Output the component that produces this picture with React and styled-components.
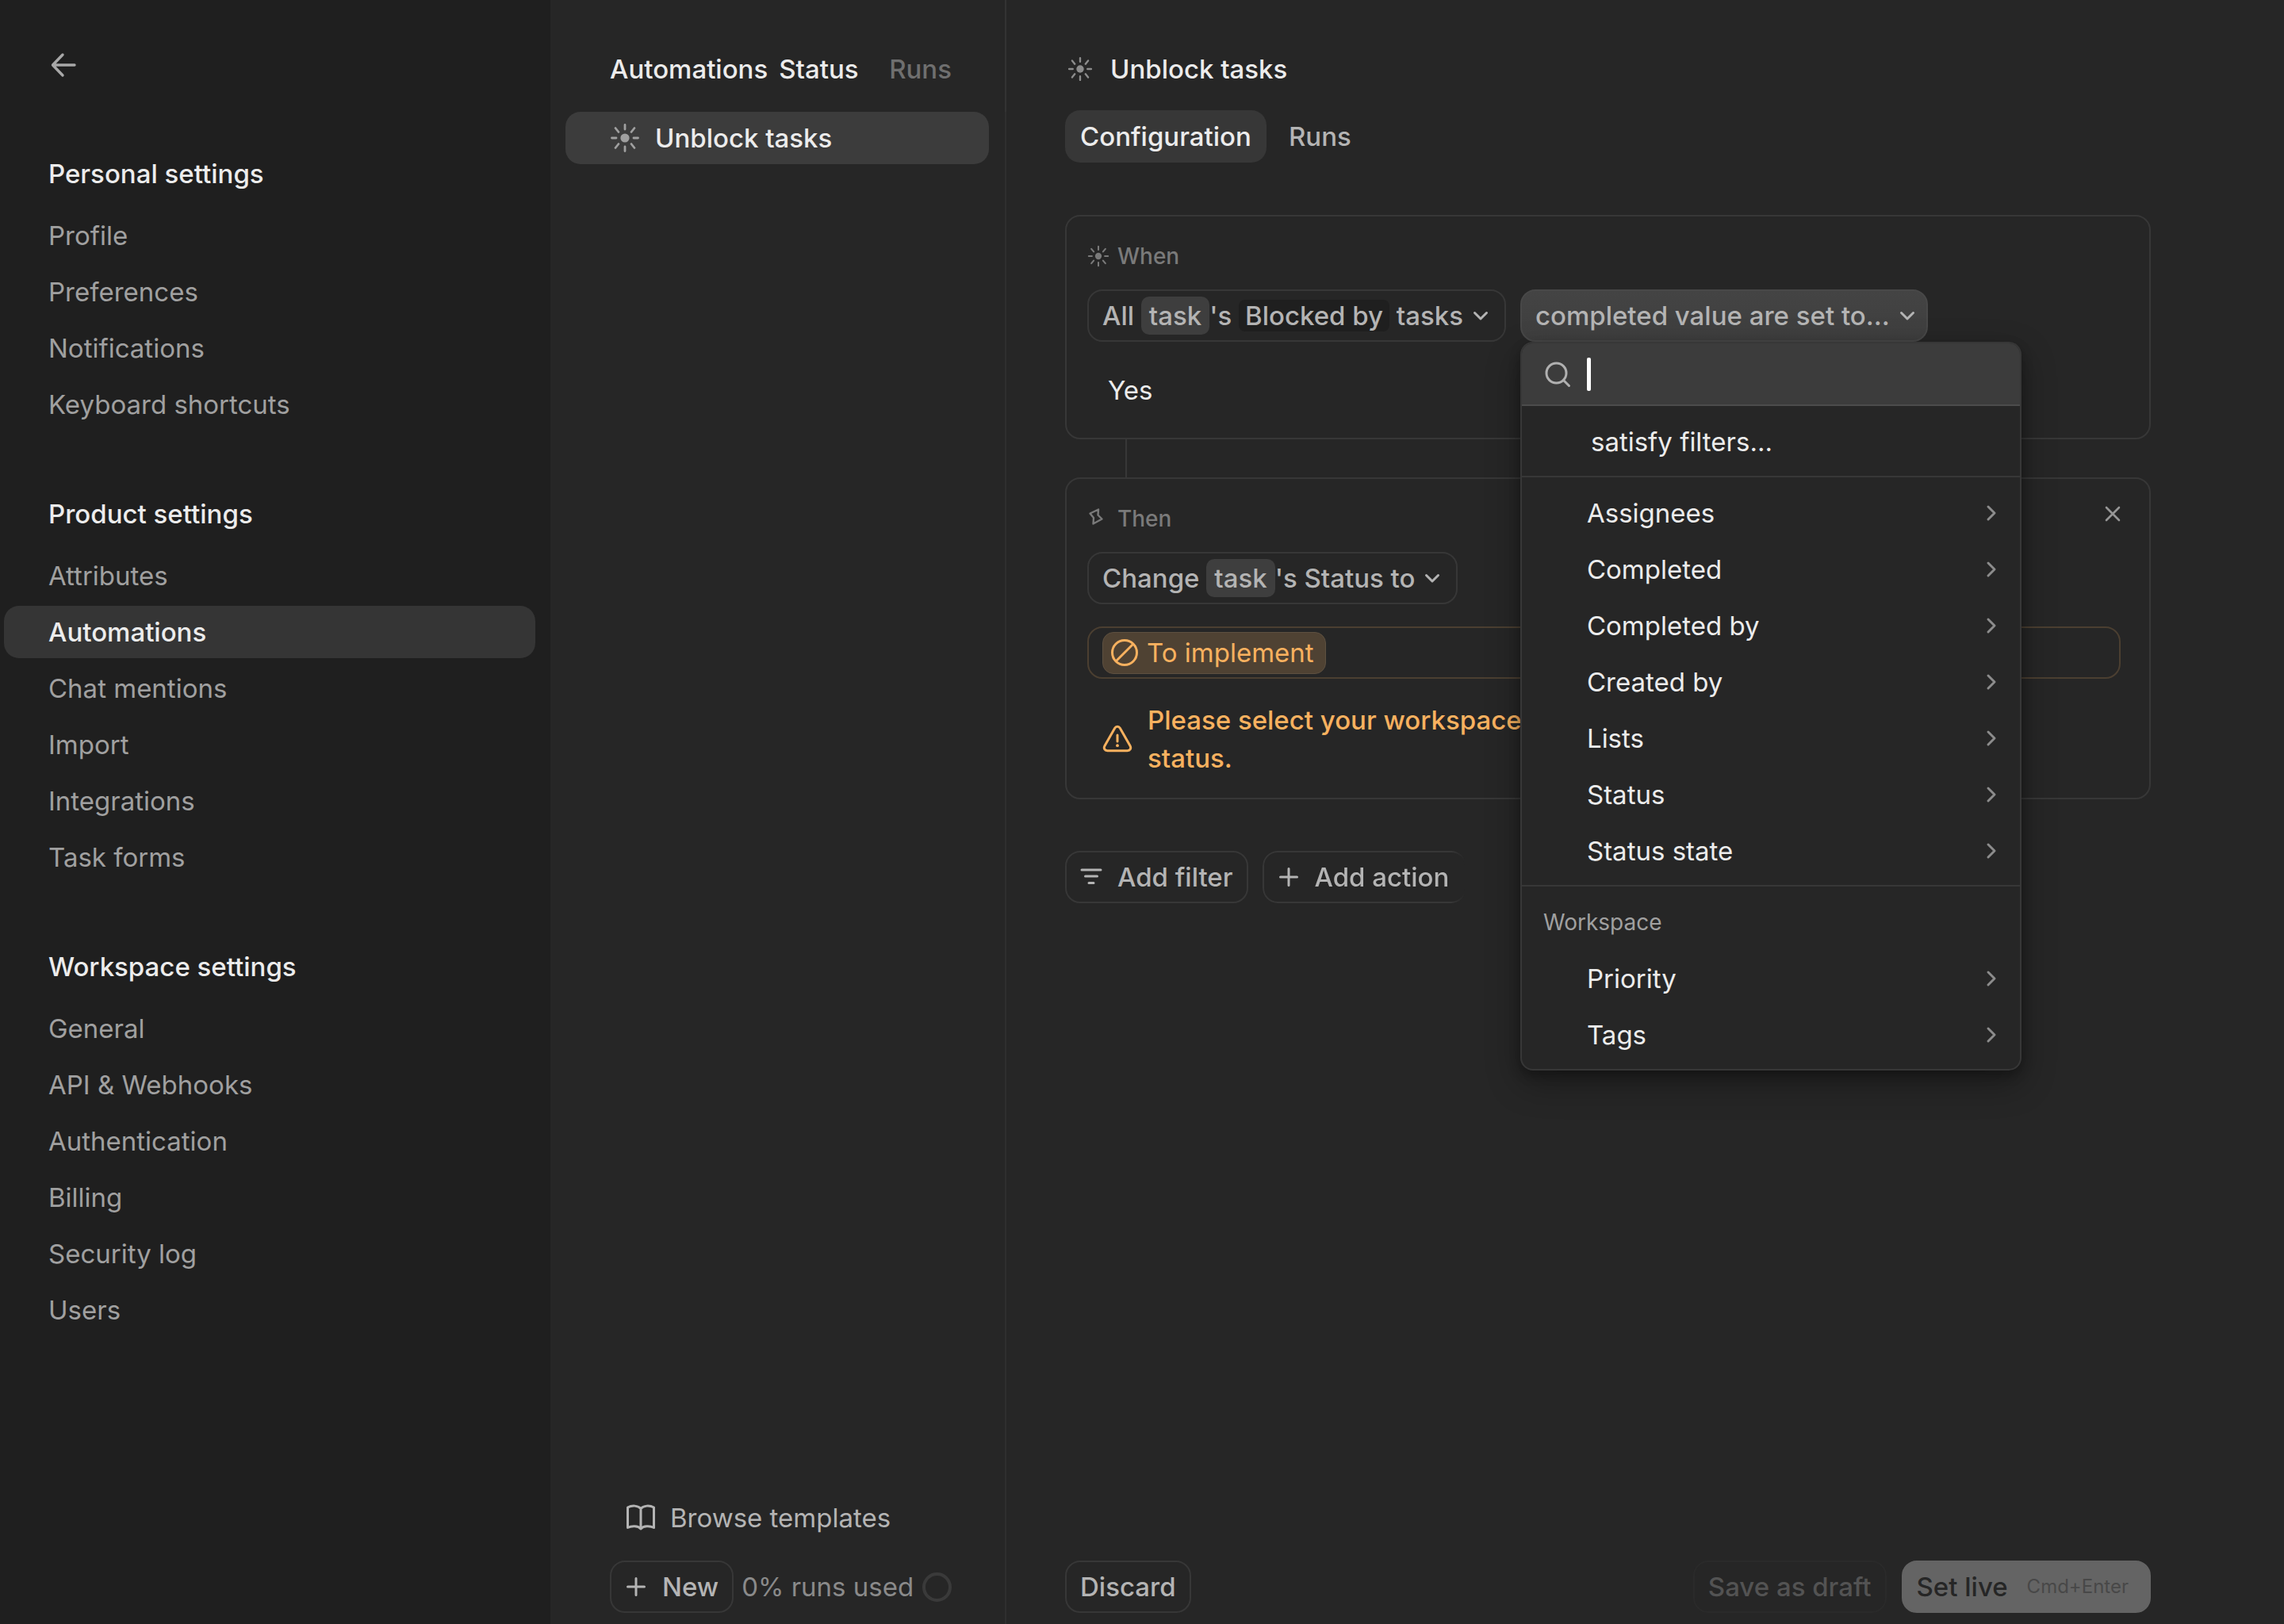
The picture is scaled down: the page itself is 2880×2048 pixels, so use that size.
import React from "react";
import styled, { createGlobalStyle } from "styled-components";

const c = {
  side: "#1f1f1f",
  bg: "#262626",
  line: "#373737",
  lineSoft: "#2f2f2f",
  raised: "#3c3c3c",
  text: "#ececec",
  muted: "#b4b4b4",
  nav: "#a0a0a0",
  dim: "#7a7a7a",
  orange: "#f8b15f",
  orangeBg: "#4f4233",
};

const GlobalStyle = createGlobalStyle`
  *, *::before, *::after { box-sizing: border-box; }
  body {
    margin: 0;
    background: ${c.bg};
    color: ${c.text};
    font-family: Inter, "Liberation Sans", sans-serif;
    font-size: 33px;
    line-height: 48px;
  }
  button, input { font: inherit; color: inherit; }
  button { cursor: pointer; }
  svg { display: block; flex: none; }
`;

const Layout = styled.div`
  display: grid;
  grid-template-columns: 694px 575px minmax(0, 1fr);
  min-height: 100vh;
`;

/* Settings navigation */

const Sidebar = styled.nav`
  display: flex;
  flex-direction: column;
  gap: 72px;
  padding: 54px 19px 54px 5px;
  background: ${c.side};
`;

const BackButton = styled.button`
  display: grid;
  place-items: center;
  width: 54px;
  height: 56px;
  margin: 0 0 4px 48px;
  padding: 0;
  border: 0;
  background: none;
  color: #a8a8a8;
`;

const NavGroup = styled.section`
  display: flex;
  flex-direction: column;
`;

const NavHeading = styled.h2`
  margin: 0 0 12px;
  padding: 0 56px;
  font-size: 33px;
  font-weight: 500;
  line-height: 66px;
`;

const NavList = styled.ul`
  display: flex;
  flex-direction: column;
  gap: 5px;
  margin: 0;
  padding: 0;
  list-style: none;
`;

const NavLink = styled.a`
  display: block;
  padding: 0 56px;
  border-radius: 19px;
  line-height: 66px;
  text-decoration: none;
  color: ${(p) => (p.$active ? c.text : c.nav)};
  background: ${(p) => (p.$active ? "#353535" : "transparent")};
  font-weight: ${(p) => (p.$active ? 500 : 400)};
`;

/* Automation list */

const ListColumn = styled.section`
  display: flex;
  flex-direction: column;
`;

const ListHeader = styled.header`
  display: flex;
  align-items: center;
  height: 141px;
  padding: 33px 67px 0 75px;
  border-right: 2px solid #333333;
  font-weight: 500;
`;

const ListTitle = styled.h1`
  margin: 0 14px 0 0;
  font-size: 33px;
  font-weight: 500;
`;

const HeaderTab = styled.button`
  padding: 0;
  border: 0;
  background: none;
  font-weight: 500;
  color: ${(p) => (p.$active ? c.text : "#6f6f6f")};
  & + & { margin-left: auto; }
`;

const ListBody = styled.div`
  flex: 1;
  padding: 0 20px 0 19px;
  border-right: 2px solid ${c.lineSoft};
`;

const AutomationRow = styled.button`
  display: flex;
  align-items: center;
  gap: 19px;
  width: 100%;
  height: 66px;
  padding: 0 56px;
  border: 0;
  border-radius: 19px;
  background: ${c.raised};
  font-weight: 500;
  svg { color: #a0a0a0; }
`;

const ListFooter = styled.footer`
  display: flex;
  flex-direction: column;
  gap: 21px;
  padding: 0 67px 14px 75px;
  border-right: 2px solid ${c.lineSoft};
`;

const BrowseLink = styled.a`
  display: flex;
  align-items: center;
  gap: 18px;
  height: 66px;
  padding: 0 20px;
  color: ${c.muted};
  font-weight: 400;
  text-decoration: none;
`;

const FooterRow = styled.div`
  display: flex;
  align-items: center;
  gap: 10px;
`;

const Usage = styled.span`
  display: flex;
  flex: 1;
  align-items: center;
  justify-content: space-between;
  white-space: nowrap;
  color: #8a8a8a;
`;

/* Shared buttons */

const Button = styled.button`
  display: inline-flex;
  align-items: center;
  gap: 19px;
  height: 66px;
  padding: 0 17px;
  border: 2px solid ${c.line};
  border-radius: 19px;
  background: transparent;
  color: ${c.muted};
  font-weight: 500;
  white-space: nowrap;
  &:disabled { cursor: default; }
`;

const GhostButton = styled(Button)`
  border-color: #2a2a2a;
  color: #535353;
`;

const PrimaryButton = styled(Button)`
  gap: 24px;
  padding-right: 26px;
  border-color: #646464;
  background: #646464;
  color: #262626;
`;

const Shortcut = styled.kbd`
  font-family: inherit;
  font-size: 24px;
  font-weight: 400;
  color: #484848;
`;

const FadingButton = styled(Button)`
  padding-right: 20px;
  mask-image: linear-gradient(to right, #000 calc(100% - 18px), transparent calc(100% - 2px));
`;

/* Editor */

const Editor = styled.main`
  display: flex;
  flex-direction: column;
  padding: 54px 168px 14px 74px;
`;

const EditorTitle = styled.div`
  display: flex;
  align-items: center;
  gap: 22px;
  height: 66px;
  padding-left: 3px;
  svg { color: #8c8c8c; }
  h2 { margin: 0; font-size: 33px; font-weight: 500; }
`;

const Tabs = styled.div`
  display: flex;
  gap: 9px;
  margin: 19px 0 66px;
`;

const Tab = styled.button`
  height: 66px;
  padding: 0 19px;
  border: 0;
  border-radius: 19px;
  background: ${(p) => (p.$active ? "#373737" : "transparent")};
  color: ${(p) => (p.$active ? c.text : c.muted)};
  font-weight: 500;
`;

const Card = styled.section`
  display: flex;
  flex-direction: column;
  gap: 28px;
  padding: 30px 36px 26px 26px;
  border: 2px solid ${c.line};
  border-radius: 19px;
`;

const CardTop = styled.header`
  display: flex;
  align-items: center;
  gap: 10px;
  height: 40px;
  margin-bottom: -6px;
  color: ${c.dim};
  h3 { margin: 0; font-size: 28px; font-weight: 500; line-height: 40px; }
`;

const CloseButton = styled.button`
  display: grid;
  place-items: center;
  width: 24px;
  height: 24px;
  margin: 0 -2px 12px auto;
  padding: 0;
  border: 0;
  background: none;
  color: #969696;
`;

const Connector = styled.div`
  width: 2px;
  height: 48px;
  margin-left: 76px;
  background: ${c.line};
`;

const Condition = styled.div`
  display: flex;
  gap: 18px;
`;

const Trigger = styled(Button)`
  gap: 10px;
  padding-right: ${(p) => (p.$open ? "12px" : "18px")};
  background: ${(p) => (p.$open ? "linear-gradient(#444444, #3e3e3e)" : "transparent")};
  border-color: ${(p) => (p.$open ? "#484848" : c.line)};
  svg { color: ${c.muted}; }
`;

const Token = styled.span`
  display: inline-block;
  height: ${(p) => (p.$dark ? "40px" : "48px")};
  padding: 0 ${(p) => (p.$dark ? "8px" : "10px")};
  border-radius: ${(p) => (p.$dark ? "8px" : "10px")};
  background: ${(p) => (p.$dark ? "#1f1f1f" : "#3e3e3e")};
  line-height: ${(p) => (p.$dark ? "40px" : "48px")};
`;

const Value = styled.p`
  margin: 0;
  padding: 0 26px;
  line-height: 67px;
`;

const StatusField = styled.button`
  display: flex;
  align-items: center;
  height: 66px;
  padding: 0 17px;
  border: 2px solid #4b3f31;
  border-radius: 19px;
  background: transparent;
`;

const StatusChip = styled.span`
  display: flex;
  align-items: center;
  gap: 10px;
  height: 53px;
  padding: 0 14px 0 9px;
  border: 1px solid #5d5040;
  border-radius: 14px;
  background: ${c.orangeBg};
  color: ${c.orange};
`;

const Warning = styled.p`
  display: flex;
  align-items: center;
  gap: 19px;
  margin: 0;
  padding-left: 19px;
  color: ${c.orange};
  font-weight: 500;
`;

const AddRow = styled.div`
  display: flex;
  gap: 18px;
  margin: 65px 0;
`;

const EditorFooter = styled.footer`
  display: flex;
  gap: 19px;
  margin-top: auto;
  & > :first-child { margin-right: auto; }
`;

/* Value menu */

const MenuAnchor = styled.div`
  position: relative;
`;

const Menu = styled.div`
  position: absolute;
  z-index: 10;
  top: 100%;
  left: 0;
  width: 632px;
  border: 2px solid ${c.line};
  border-radius: 16px;
  background: ${c.bg};
  box-shadow: 0 16px 44px rgba(0, 0, 0, 0.32), 0 6px 14px rgba(0, 0, 0, 0.28);
  overflow: hidden;
`;

const SearchBox = styled.label`
  display: flex;
  align-items: center;
  gap: 20px;
  height: 79px;
  padding: 0 28px;
  border-bottom: 2px solid #4c4c4c;
  background: ${c.raised};
  color: #b0b0b0;
`;

const Caret = styled.span`
  width: 5px;
  height: 42px;
  margin-right: -20px;
  border-radius: 2px;
  background: #ffffff;
`;

const SearchInput = styled.input`
  flex: 1;
  min-width: 0;
  padding: 0;
  border: 0;
  outline: 0;
  background: transparent;
  color: ${c.text};
  caret-color: transparent;
`;

const MenuSection = styled.div`
  display: flex;
  flex-direction: column;
  gap: 5px;
  padding: 12px 0 10px;
  & + & { border-top: 2px solid ${c.line}; }
`;

const MenuLabel = styled.div`
  padding: 0 27px;
  color: #a0a0a0;
  font-size: 28px;
  line-height: 66px;
`;

const MenuItem = styled.button`
  display: flex;
  align-items: center;
  justify-content: space-between;
  height: 66px;
  padding: 0 24px 0 ${(p) => (p.$indent ? "87px" : "82px")};
  border: 0;
  background: none;
  color: ${c.text};
  text-align: left;
  svg { color: #8c8c8c; }
`;

/* Icons */

const Stroke = ({ size = 24, box = size, width = 3, children }) => (
  <svg width={size} height={size} viewBox={`0 0 ${box} ${box}`} fill="none" stroke="currentColor"
    strokeWidth={width} strokeLinecap="round" strokeLinejoin="round" aria-hidden="true">
    {children}
  </svg>
);

const SunIcon = ({ size = 38 }) => (
  <Stroke size={size} box={38} width={2.8}>
    <circle cx="19" cy="19" r="5.6" fill="currentColor" stroke="none" />
    <path d="M19 2.500v5.500M19 30v5.500M2.500 19H8M30 19h5.500M7 6.500l4 5M31 6.500l-4 5M7 31.500l4-5M31 31.500l-4-5" />
  </Stroke>
);

const BackIcon = () => (
  <Stroke size={34} width={3.4}><path d="M31 17H4M16 4L3.500 17L16 30" /></Stroke>
);
const DownIcon = () => (
  <Stroke width={3}><path d="M4.500 8.500l7.500 7.500 7.500-7.500" /></Stroke>
);
const RightIcon = () => (
  <Stroke width={3}><path d="M8 4l8 8-8 8" /></Stroke>
);
const PlusIcon = () => (
  <Stroke size={28} width={3}><path d="M14 3.500v21M3.500 14h21" /></Stroke>
);
const CloseIcon = () => (
  <Stroke width={2.6}><path d="M4 4l16 16M20 4L4 20" /></Stroke>
);
const FilterIcon = () => (
  <Stroke size={28} width={3}><path d="M2 5h24M6.500 13h15M11 21.500h6" /></Stroke>
);
const SearchIcon = () => (
  <Stroke size={34} width={3}><circle cx="15.500" cy="15.500" r="12.500" /><path d="M25 25l6.500 6.500" /></Stroke>
);
const BookIcon = () => (
  <Stroke size={38} width={3}>
    <path d="M19 7.500C15.500 3.500 8 3 2.500 6v25.500c5-2.500 13-2.500 16.500 1.500 3.500-4 11.500-4 16.500-1.500V6C30 3 22.500 3.500 19 7.500zM19 7.500V33" />
  </Stroke>
);
const BanIcon = () => (
  <Stroke size={36} width={3}><circle cx="18" cy="18" r="15.500" /><path d="M8 28L28 8" /></Stroke>
);
const WarnIcon = () => (
  <Stroke size={38} width={3}>
    <path d="M15.700 5.200L3 27.500c-1.800 3.200 0 6.200 3.400 6.200h25.200c3.400 0 5.200-3 3.400-6.200L22.300 5.200c-1.600-2.700-5-2.700-6.600 0zM19 14v8" />
    <circle cx="19" cy="27.200" r="1.900" fill="currentColor" stroke="none" />
  </Stroke>
);
const BoltIcon = () => (
  <Stroke size={28} width={2.4}>
    <path d="M14 2.500L3.500 7.500L8 13L7.500 20.500L18.500 14.500L13.500 9.500z" />
  </Stroke>
);
const RingIcon = () => (
  <svg width="37" height="37" viewBox="0 0 37 37" fill="none" aria-hidden="true">
    <circle cx="18.5" cy="18.5" r="16.500" stroke="#3a3a3a" strokeWidth="4" />
  </svg>
);

const navGroups = [
  { title: "Personal settings", items: ["Profile", "Preferences", "Notifications", "Keyboard shortcuts"] },
  { title: "Product settings", items: ["Attributes", "Automations", "Chat mentions", "Import", "Integrations", "Task forms"] },
  { title: "Workspace settings", items: ["General", "API & Webhooks", "Authentication", "Billing", "Security log", "Users"] },
];

const attributes = ["Assignees", "Completed", "Completed by", "Created by", "Lists", "Status", "Status state"];
const workspaceAttributes = ["Priority", "Tags"];

const AttributeItem = ({ name }) => (
  <MenuItem role="menuitem" type="button">
    {name}
    <RightIcon />
  </MenuItem>
);

function ValueMenu() {
  return (
    <Menu role="menu">
      <SearchBox>
        <SearchIcon />
        <Caret />
        <SearchInput type="text" aria-label="Search values" />
      </SearchBox>
      <MenuSection>
        <MenuItem role="menuitem" type="button" $indent>satisfy filters...</MenuItem>
      </MenuSection>
      <MenuSection>
        {attributes.map((name) => <AttributeItem key={name} name={name} />)}
      </MenuSection>
      <MenuSection>
        <MenuLabel>Workspace</MenuLabel>
        {workspaceAttributes.map((name) => <AttributeItem key={name} name={name} />)}
      </MenuSection>
    </Menu>
  );
}

export default function App() {
  return (
    <>
      <GlobalStyle />
      <Layout>
        <Sidebar aria-label="Settings">
          <BackButton type="button" aria-label="Back"><BackIcon /></BackButton>
          {navGroups.map((group) => (
            <NavGroup key={group.title}>
              <NavHeading>{group.title}</NavHeading>
              <NavList>
                {group.items.map((item) => (
                  <li key={item}>
                    <NavLink href="#" $active={item === "Automations"}>{item}</NavLink>
                  </li>
                ))}
              </NavList>
            </NavGroup>
          ))}
        </Sidebar>

        <ListColumn>
          <ListHeader>
            <ListTitle>Automations</ListTitle>
            <HeaderTab type="button" $active>Status</HeaderTab>
            <HeaderTab type="button">Runs</HeaderTab>
          </ListHeader>
          <ListBody>
            <AutomationRow type="button"><SunIcon />Unblock tasks</AutomationRow>
          </ListBody>
          <ListFooter>
            <BrowseLink href="#"><BookIcon />Browse templates</BrowseLink>
            <FooterRow>
              <Button type="button"><PlusIcon />New</Button>
              <Usage>0% runs used<RingIcon /></Usage>
            </FooterRow>
          </ListFooter>
        </ListColumn>

        <Editor>
          <EditorTitle><SunIcon size={32} /><h2>Unblock tasks</h2></EditorTitle>
          <Tabs>
            <Tab type="button" $active>Configuration</Tab>
            <Tab type="button">Runs</Tab>
          </Tabs>

          <Card>
            <CardTop><SunIcon size={28} /><h3>When</h3></CardTop>
            <Condition>
              <Trigger type="button">
                <span>All <Token>task</Token>'s <Token $dark>Blocked by</Token> tasks</span>
                <DownIcon />
              </Trigger>
              <MenuAnchor>
                <Trigger type="button" $open aria-haspopup="menu" aria-expanded="true">
                  completed value are set to...
                  <DownIcon />
                </Trigger>
                <ValueMenu />
              </MenuAnchor>
            </Condition>
            <Value>Yes</Value>
          </Card>

          <Connector />

          <Card>
            <CardTop>
              <BoltIcon /><h3>Then</h3>
              <CloseButton type="button" aria-label="Remove action"><CloseIcon /></CloseButton>
            </CardTop>
            <Condition>
              <Trigger type="button">
                <span>Change <Token>task</Token>'s Status to</span>
                <DownIcon />
              </Trigger>
            </Condition>
            <StatusField type="button">
              <StatusChip><BanIcon />To implement</StatusChip>
            </StatusField>
            <Warning>
              <WarnIcon />
              <span>Please select your workspace<br />status.</span>
            </Warning>
          </Card>

          <AddRow>
            <Button type="button"><FilterIcon />Add filter</Button>
            <FadingButton type="button"><PlusIcon />Add action</FadingButton>
          </AddRow>

          <EditorFooter>
            <Button type="button">Discard</Button>
            <GhostButton type="button" disabled>Save as draft</GhostButton>
            <PrimaryButton type="button" disabled>Set live <Shortcut>Cmd+Enter</Shortcut></PrimaryButton>
          </EditorFooter>
        </Editor>
      </Layout>
    </>
  );
}
